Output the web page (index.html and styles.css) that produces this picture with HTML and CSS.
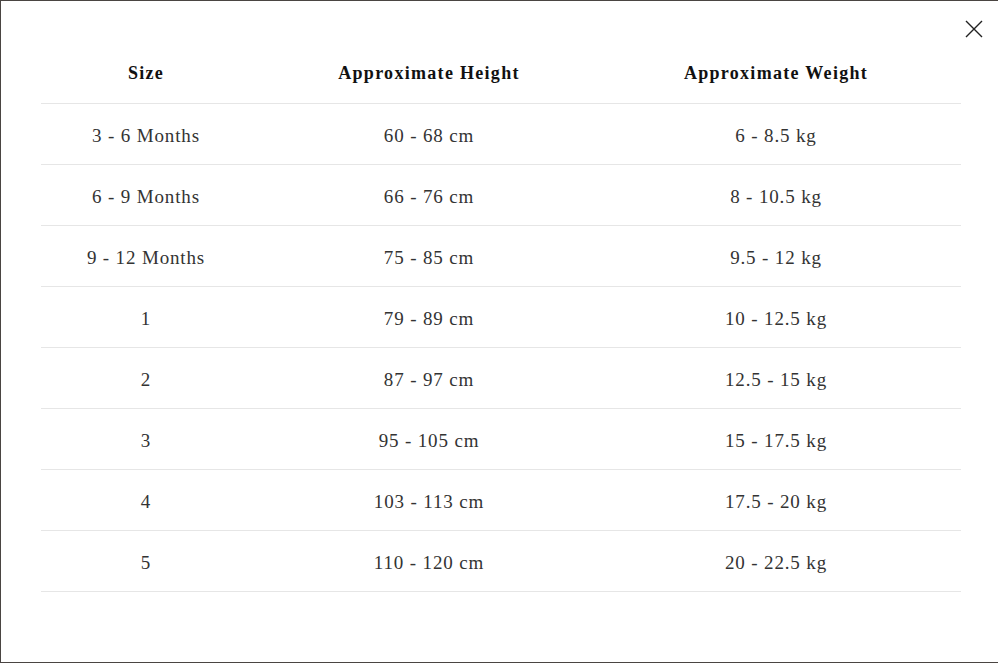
FILE: index.html
```html
<!DOCTYPE html>
<html>
<head>
<meta charset="utf-8">
<link rel="stylesheet" href="styles.css">
</head>
<body>
<div class="modal">
  <button class="close" aria-label="Close">
    <svg width="18" height="18" viewBox="0 0 18 18"><path d="M1 1 L17 17 M17 1 L1 17" stroke="#222" stroke-width="1.4" fill="none"/></svg>
  </button>
  <table class="sizes">
    <colgroup><col class="c1"><col class="c2"><col class="c3"></colgroup>
    <thead>
      <tr><th>Size</th><th>Approximate Height</th><th class="last">Approximate Weight</th></tr>
    </thead>
    <tbody>
      <tr><td>3 - 6 Months</td><td>60 - 68 cm</td><td class="last">6 - 8.5 kg</td></tr>
      <tr><td>6 - 9 Months</td><td>66 - 76 cm</td><td class="last">8 - 10.5 kg</td></tr>
      <tr><td>9 - 12 Months</td><td>75 - 85 cm</td><td class="last">9.5 - 12 kg</td></tr>
      <tr><td>1</td><td>79 - 89 cm</td><td class="last">10 - 12.5 kg</td></tr>
      <tr><td>2</td><td>87 - 97 cm</td><td class="last">12.5 - 15 kg</td></tr>
      <tr><td>3</td><td>95 - 105 cm</td><td class="last">15 - 17.5 kg</td></tr>
      <tr><td>4</td><td>103 - 113 cm</td><td class="last">17.5 - 20 kg</td></tr>
      <tr><td>5</td><td>110 - 120 cm</td><td class="last">20 - 22.5 kg</td></tr>
    </tbody>
  </table>
</div>
</body>
</html>
```
FILE: styles.css
```css
html, body { margin: 0; padding: 0; }
body {
  background: #4a4542;
  width: 998px;
  height: 663px;
  overflow: hidden;
  box-sizing: border-box;
  padding: 1px 0 1px 1px;
}
.modal {
  position: relative;
  background: #fff;
  height: 661px;
  box-sizing: border-box;
  padding: 42px 0 0 40px;
  font-family: "Liberation Serif", "DejaVu Serif", serif;
  color: #2a2a2a;
}
.close {
  position: absolute;
  top: 17px;
  right: 13px;
  width: 22px;
  height: 22px;
  padding: 2px;
  border: 0;
  background: none;
  cursor: pointer;
}
.sizes {
  width: 920px;
  border-collapse: collapse;
  table-layout: fixed;
}
.c1 { width: 210px; }
.c2 { width: 356px; }
.c3 { width: 354px; }
.sizes th, .sizes td {
  padding: 0;
  text-align: center;
  vertical-align: middle;
  border-bottom: 1px solid #e6e6e6;
}
.sizes th {
  height: 60px;
  font-size: 18px;
  font-weight: bold;
  color: #111;
  letter-spacing: 1.3px;
}
.sizes td {
  height: 56px;
  padding-top: 4px;
  font-size: 19px;
  color: #333;
  letter-spacing: 0.85px;
}
.sizes .last { padding-right: 16px; }
```
